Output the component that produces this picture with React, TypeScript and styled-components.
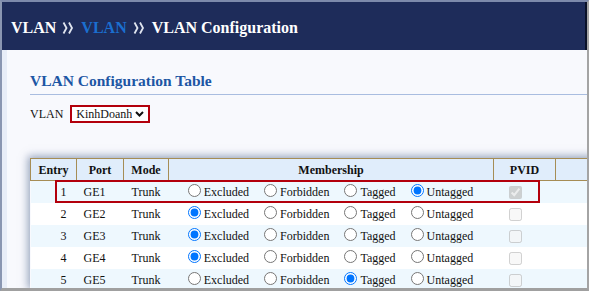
import React from "react";
import styled, { createGlobalStyle } from "styled-components";

const SERIF = `"Liberation Serif", "Times New Roman", Times, serif`;

const Global = createGlobalStyle`
  html, body { margin: 0; padding: 0; background: #ffffff; }
  body { font-family: ${SERIF}; }
  * { box-sizing: border-box; }
`;

const Frame = styled.div`
  width: 589px;
  height: 291px;
  display: flex;
  flex-direction: column;
  border-top: 2px solid #7d8aab;
  border-left: 2px solid #8a96b1;
  border-right: 2px solid #a4a4a4;
  border-bottom: 3px solid #a0a0a0;
  overflow: hidden;
  background: #f8f9fd;
  font-family: ${SERIF};
`;

const Header = styled.header`
  height: 48px;
  flex: none;
  background: #1e2c5a;
  border-right: 2px solid #0a1128;
  display: flex;
  align-items: center;
  gap: 6px;
  padding: 4px 0 0 9px;
  font-family: ${SERIF};
  font-size: 16px;
  font-weight: bold;
  line-height: 20px;
  color: #ffffff;
`;

const Crumb = styled.span<{ $active?: boolean }>`
  font-family: ${SERIF};
  color: ${(p) => (p.$active ? "#1b6fd0" : "#ffffff")};
`;

const Sep = styled.svg`
  width: 12px;
  height: 12px;
  flex: none;
  margin: 0 1px 0 0;
`;

const Body = styled.main`
  flex: 1;
  min-height: 0;
  border-left: 5px solid #e8edf7;
  padding: 21px 0 0 23px;
  overflow: hidden;
`;

const Title = styled.h2`
  margin: 0;
  font-family: ${SERIF};
  font-size: 15.5px;
  font-weight: bold;
  line-height: 20px;
  color: #1d56a4;
  padding-bottom: 3px;
  border-bottom: 1px solid #a9bde0;
`;

const FilterRow = styled.div`
  margin-top: 10px;
  display: flex;
  align-items: center;
  gap: 7px;
  font-family: ${SERIF};
  font-size: 12px;
  line-height: 14px;
  color: #111;
`;

const SelectBox = styled.label`
  height: 18px;
  display: inline-flex;
  align-items: center;
  gap: 3px;
  border: 2px solid #b3000c;
  padding: 0 4px 0 4px;
  background: #ffffff;
`;

const Select = styled.select`
  appearance: none;
  border: none;
  background: transparent;
  padding: 0;
  margin: 0;
  font-family: ${SERIF};
  font-size: 12px;
  line-height: 14px;
  color: #111;
  outline: none;
`;

const TableWrap = styled.div`
  margin-top: 35px;
  position: relative;
  width: 640px;
  box-shadow: -2px -2px 8px rgba(70, 92, 135, 0.55);
`;

const Table = styled.table`
  width: 640px;
  border-collapse: collapse;
  table-layout: fixed;
  font-family: ${SERIF};
  font-size: 12px;
  line-height: 14px;
  color: #111;
`;

const Th = styled.th`
  height: 22px;
  padding: 0;
  border: 1px solid #a68d55;
  background: #e0edfb;
  font-family: ${SERIF};
  font-weight: bold;
  text-align: center;
`;

const Row = styled.tr<{ $alt: boolean }>`
  background: ${(p) => (p.$alt ? "#eef8fe" : "#ffffff")};
`;

const Td = styled.td<{ $align?: "left" | "right" | "center"; $pl?: number; $pr?: number }>`
  height: 22px;
  padding: 0 ${(p) => p.$pr ?? 0}px 0 ${(p) => p.$pl ?? 0}px;
  text-align: ${(p) => p.$align ?? "center"};
  white-space: nowrap;
  font-family: ${SERIF};
`;

const Options = styled.div`
  display: flex;
  justify-content: center;
  align-items: center;
  gap: 10px;
  padding-right: 6px;
`;

const Option = styled.label`
  display: inline-flex;
  align-items: center;
  font-family: ${SERIF};
`;

const Radio = styled.input`
  width: 13px;
  height: 13px;
  margin: 0 3px 2px 5px;
`;

const Check = styled.input`
  width: 13px;
  height: 13px;
  margin: 0 0 0 4px;
  vertical-align: middle;
`;

const Highlight = styled.div`
  position: absolute;
  left: 25px;
  top: 22px;
  width: 485px;
  height: 23px;
  border: 2px solid #b3000c;
  pointer-events: none;
`;

const Chevrons = () => (
  <Sep viewBox="0 0 12 12">
    <polyline points="1.5,0.5 4.5,6 1.5,11.5" fill="none" stroke="#dfe4ee" strokeWidth="1.8" />
    <polyline points="7,0.5 10,6 7,11.5" fill="none" stroke="#dfe4ee" strokeWidth="1.8" />
  </Sep>
);

const Chevron = styled.svg`
  width: 9px;
  height: 6px;
  flex: none;
`;

const choices = ["Excluded", "Forbidden", "Tagged", "Untagged"];
const rows = [
  { entry: 1, port: "GE1", sel: "Untagged", pvid: true },
  { entry: 2, port: "GE2", sel: "Excluded", pvid: false },
  { entry: 3, port: "GE3", sel: "Excluded", pvid: false },
  { entry: 4, port: "GE4", sel: "Excluded", pvid: false },
  { entry: 5, port: "GE5", sel: "Tagged", pvid: false },
];

export default function App() {
  return (
    <>
      <Global />
      <Frame>
        <Header>
          <Crumb>VLAN</Crumb>
          <Chevrons />
          <Crumb $active>VLAN</Crumb>
          <Chevrons />
          <Crumb>VLAN Configuration</Crumb>
        </Header>
        <Body>
          <Title>VLAN Configuration Table</Title>
          <FilterRow>
            <span>VLAN</span>
            <SelectBox>
              <Select defaultValue="KinhDoanh">
                <option>KinhDoanh</option>
              </Select>
              <Chevron viewBox="0 0 9 6">
                <polyline points="1,1 4.5,4.5 8,1" fill="none" stroke="#111" strokeWidth="2" />
              </Chevron>
            </SelectBox>
          </FilterRow>
          <TableWrap>
            <Table>
              <colgroup>
                <col style={{ width: 46 }} />
                <col style={{ width: 47 }} />
                <col style={{ width: 45 }} />
                <col style={{ width: 325 }} />
                <col style={{ width: 62 }} />
                <col style={{ width: 115 }} />
              </colgroup>
              <thead>
                <tr>
                  <Th>Entry</Th>
                  <Th>Port</Th>
                  <Th>Mode</Th>
                  <Th>Membership</Th>
                  <Th>PVID</Th>
                  <Th />
                </tr>
              </thead>
              <tbody>
                {rows.map((r, i) => (
                  <Row key={r.entry} $alt={i % 2 === 0}>
                    <Td $align="right" $pr={10}>{r.entry}</Td>
                    <Td $align="left" $pl={7}>{r.port}</Td>
                    <Td>Trunk</Td>
                    <Td>
                      <Options>
                        {choices.map((c) => (
                          <Option key={c}>
                            <Radio type="radio" name={`m${r.entry}`} defaultChecked={r.sel === c} />
                            {c}
                          </Option>
                        ))}
                      </Options>
                    </Td>
                    <Td $align="left" $pl={11}>
                      <Check type="checkbox" disabled defaultChecked={r.pvid} />
                    </Td>
                    <Td />
                  </Row>
                ))}
              </tbody>
            </Table>
            <Highlight />
          </TableWrap>
        </Body>
      </Frame>
    </>
  );
}
